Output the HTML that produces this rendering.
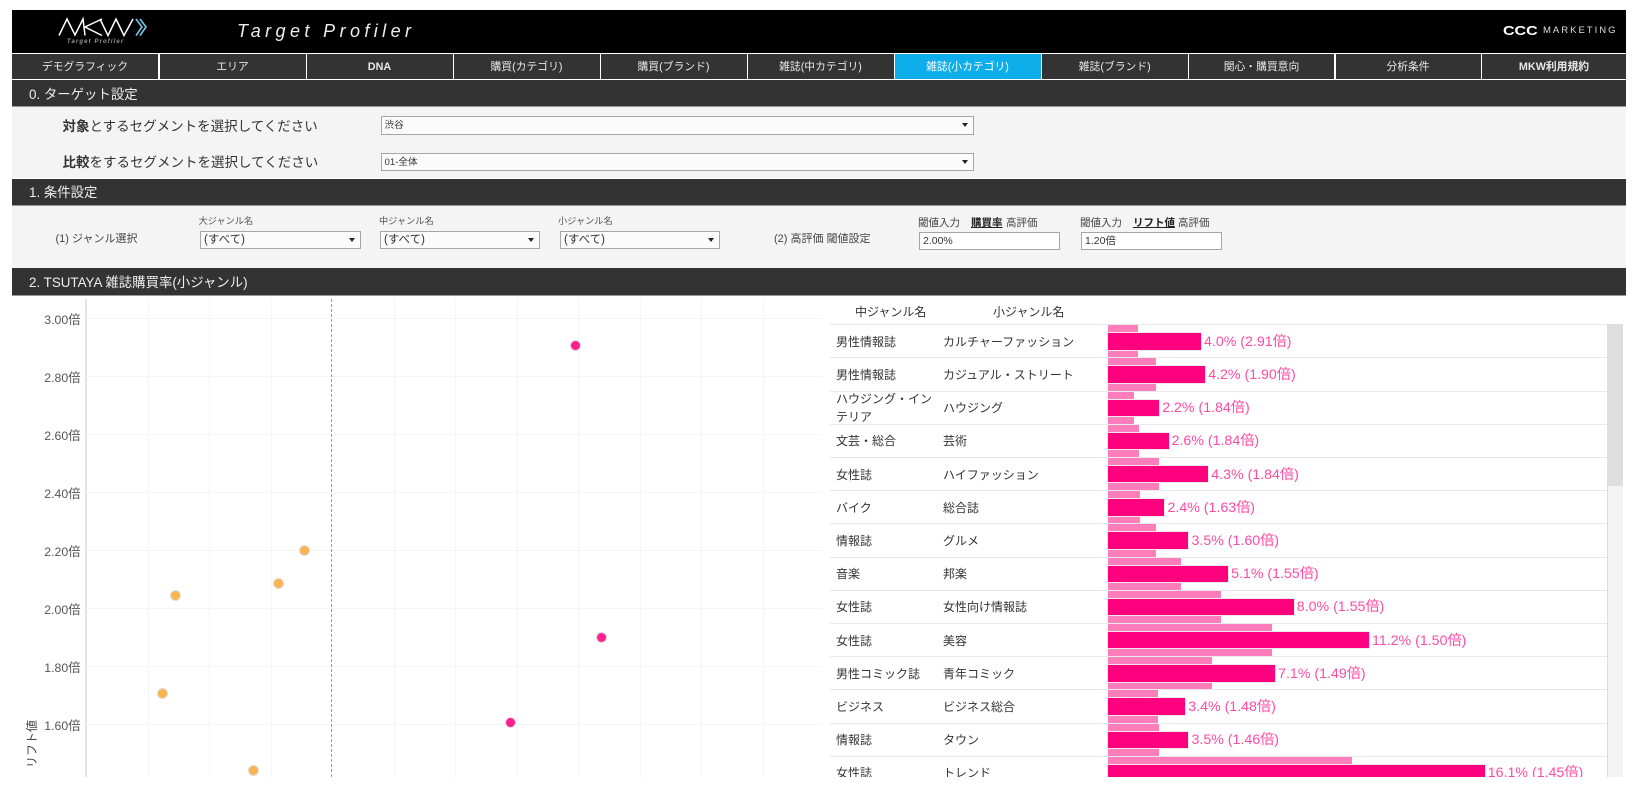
<!DOCTYPE html>
<html lang="ja"><head><meta charset="utf-8"><title>Target Profiler</title>
<style>
html,body{margin:0;padding:0;background:#fff;width:1636px;height:808px;overflow:hidden}
body{font-family:"Liberation Sans","Noto Sans CJK JP",sans-serif;position:relative;color:#333}
.a{position:absolute}
.t{position:absolute;white-space:nowrap}
.nav{position:absolute;top:53.5px;height:25px;line-height:27px;background:#333;color:#e8e8e8;font-size:10.8px;text-align:center}
.sec{position:absolute;left:12px;width:1614px;background:#333;color:#eee;font-size:13.4px;box-sizing:border-box;padding-left:17px;border-bottom:1px solid #999}
.sel{position:absolute;box-sizing:border-box;background:#fbfbfb;border:1px solid #a6a6a6;font-size:9.6px;color:#333;padding-left:3px}
.sel:after{content:"";position:absolute;right:5px;top:50%;margin-top:-2px;border-left:3.2px solid transparent;border-right:3.2px solid transparent;border-top:4.5px solid #222}
.inp{position:absolute;box-sizing:border-box;background:#fff;border:1px solid #a6a6a6;font-size:10.5px;color:#333;padding-left:3px;height:18px;line-height:16px;width:141px;top:231.5px}
.v{position:absolute;top:299px;height:478px;width:1px;background:#f5f5f5}
.h{position:absolute;left:86px;width:737px;height:1px;background:#f5f5f5}
.y{position:absolute;left:29px;width:51.5px;text-align:right;font-size:12.3px;color:#555;line-height:14px}
.d{position:absolute;width:9px;height:9px;border-radius:50%;box-shadow:0 0 0 1px #ddd}
.p{background:#ff1f8f}.o{background:#fbb44f}
.r{position:absolute;left:0;width:777px;height:33.2px}
.c{position:absolute;font-size:12px;line-height:18px;top:7.5px;white-space:nowrap;color:#333}
.c1{left:6px}.c2{left:113px}
.l{position:absolute;left:277.6px;height:7px;background:#ff7dbb}
.m{position:absolute;left:277.6px;top:8px;height:16.4px;background:#ff007f;box-shadow:0 0 0 .6px #ddd}
.n{position:absolute;top:7.5px;font-size:14.2px;line-height:18px;color:#ff4aa5;white-space:nowrap}
.s{position:absolute;left:0;top:32.2px;width:777px;height:1px;background:#e8e8e8}
</style></head><body>
<div class="a" style="left:12px;top:9.5px;width:1614px;height:43px;background:#000"></div>
<svg class="a" style="left:50px;top:12px" width="110" height="40" viewBox="50 12 110 40">
<polyline points="59,35.5 67,19 75,35 83,19 85,35.5" fill="none" stroke="#fff" stroke-width="1.5"/>
<polyline points="102,19 85,27 102,35.5" fill="none" stroke="#fff" stroke-width="1.5"/>
<polyline points="100,19 108,35.5 116,19 124,35.5 133,19" fill="none" stroke="#fff" stroke-width="1.5"/>
<polyline points="136,19 142,27 136,35.5" fill="none" stroke="#7cc4ea" stroke-width="1.6"/>
<polyline points="140,19 146,27 140,35.5" fill="none" stroke="#7cc4ea" stroke-width="1.6"/>
</svg>
<div class="t" style="left:67px;top:38.5px;font-size:6px;line-height:7px;font-style:italic;font-weight:bold;letter-spacing:1.1px;color:#999">Target Profiler</div>
<div class="t" style="left:237px;top:20px;font-size:18px;line-height:22px;font-style:italic;letter-spacing:4.4px;color:#eee">Target Profiler</div>
<div class="t" style="left:1503px;top:23px;font-size:12.8px;line-height:15px;font-weight:bold;color:#fff;transform:scaleX(1.25);transform-origin:left center">CCC</div>
<div class="t" style="left:1543px;top:24.5px;font-size:9.5px;line-height:12px;color:#ddd;letter-spacing:2px">MARKETING</div>

<div class="nav" style="left:12px;width:146px">デモグラフィック</div>
<div class="nav" style="left:159.5px;width:146px">エリア</div>
<div class="nav" style="left:306.5px;width:146px;font-weight:bold">DNA</div>
<div class="nav" style="left:453.5px;width:146px">購買(カテゴリ)</div>
<div class="nav" style="left:600.5px;width:146px">購買(ブランド)</div>
<div class="nav" style="left:747.5px;width:146px">雑誌(中カテゴリ)</div>
<div class="nav" style="left:894.5px;width:146px;background:#0daeea;color:#fff">雑誌(小カテゴリ)</div>
<div class="nav" style="left:1042px;width:145.5px">雑誌(ブランド)</div>
<div class="nav" style="left:1189px;width:145px">関心・購買意向</div>
<div class="nav" style="left:1335.5px;width:145px">分析条件</div>
<div class="nav" style="left:1482px;width:144px;font-weight:bold">MKW利用規約</div>

<div class="sec" style="top:80px;height:27px;line-height:29px">0. ターゲット設定</div>
<div class="a" style="left:12px;top:107px;width:1614px;height:71px;background:#f4f4f4"></div>
<div class="t" style="left:62.5px;top:116px;font-size:13.5px;line-height:22px"><b>対象</b>とするセグメントを選択してください</div>
<div class="t" style="left:62.5px;top:152px;font-size:13.5px;line-height:22px"><b>比較</b>をするセグメントを選択してください</div>
<div class="sel" style="left:380.5px;top:116px;width:593px;height:18.5px;line-height:18px">渋谷</div>
<div class="sel" style="left:380.5px;top:152.5px;width:593px;height:18px;line-height:18px">01-全体</div>

<div class="sec" style="top:178.5px;height:27px;line-height:28px">1. 条件設定</div>
<div class="a" style="left:12px;top:205.5px;width:1614px;height:62.5px;background:#f4f4f4"></div>
<div class="t" style="left:55.5px;top:229.5px;font-size:11px;line-height:18px;color:#444">(1) ジャンル選択</div>
<div class="t" style="left:198.5px;top:215px;font-size:9.2px;line-height:12px;color:#555">大ジャンル名</div>
<div class="t" style="left:379px;top:215px;font-size:9.2px;line-height:12px;color:#555">中ジャンル名</div>
<div class="t" style="left:558px;top:215px;font-size:9.2px;line-height:12px;color:#555">小ジャンル名</div>
<div class="sel" style="left:200px;top:230.5px;width:160.5px;height:18px;line-height:17px;font-size:11.5px">(すべて)</div>
<div class="sel" style="left:380px;top:230.5px;width:160px;height:18px;line-height:17px;font-size:11.5px">(すべて)</div>
<div class="sel" style="left:560px;top:230.5px;width:159.5px;height:18px;line-height:17px;font-size:11.5px">(すべて)</div>
<div class="t" style="left:774px;top:229.5px;font-size:11px;line-height:18px;color:#444">(2) 高評価 閾値設定</div>
<div class="t" style="left:918px;top:215.5px;font-size:10.5px;line-height:14px;color:#444">閾値入力</div>
<div class="t" style="left:971px;top:215.5px;font-size:10.5px;line-height:14px;font-weight:bold;text-decoration:underline;color:#222">購買率</div>
<div class="t" style="left:1006px;top:215.5px;font-size:10.5px;line-height:14px;color:#444">高評価</div>
<div class="t" style="left:1080px;top:215.5px;font-size:10.5px;line-height:14px;color:#444">閾値入力</div>
<div class="t" style="left:1133px;top:215.5px;font-size:10.5px;line-height:14px;font-weight:bold;text-decoration:underline;color:#222">リフト値</div>
<div class="t" style="left:1178px;top:215.5px;font-size:10.5px;line-height:14px;color:#444">高評価</div>
<div class="inp" style="left:919px">2.00%</div>
<div class="inp" style="left:1081px">1.20倍</div>

<div class="sec" style="top:268px;height:27.5px;line-height:29px">2. TSUTAYA 雑誌購買率(小ジャンル)</div>

<div class="a" style="left:85px;top:299px;width:2px;height:478px;background:#e4e4e4"></div>
<div class="v" style="left:148px"></div><div class="v" style="left:209px"></div><div class="v" style="left:271px"></div>
<div class="v" style="left:393.5px"></div><div class="v" style="left:455px"></div><div class="v" style="left:516.5px"></div><div class="v" style="left:578px"></div><div class="v" style="left:640px"></div><div class="v" style="left:701px"></div><div class="v" style="left:763px"></div>
<div class="h" style="top:318px"></div><div class="h" style="top:376px"></div><div class="h" style="top:434px"></div><div class="h" style="top:492px"></div><div class="h" style="top:550px"></div><div class="h" style="top:608px"></div><div class="h" style="top:666px"></div><div class="h" style="top:724px"></div>
<div class="a" style="left:331px;top:299px;height:478px;border-left:1.5px dashed #999"></div>
<div class="y" style="top:312.5px">3.00倍</div><div class="y" style="top:370.5px">2.80倍</div><div class="y" style="top:428.5px">2.60倍</div><div class="y" style="top:486.5px">2.40倍</div><div class="y" style="top:544.5px">2.20倍</div><div class="y" style="top:602.5px">2.00倍</div><div class="y" style="top:660.5px">1.80倍</div><div class="y" style="top:718.5px">1.60倍</div>
<div class="t" style="left:8px;top:737px;width:48px;height:14px;line-height:14px;font-size:12px;color:#444;transform:rotate(-90deg);text-align:left">リフト値</div>
<div class="d p" style="left:571px;top:341px"></div>
<div class="d p" style="left:596.5px;top:633px"></div>
<div class="d p" style="left:506px;top:717.5px"></div>
<div class="d o" style="left:300px;top:545.5px"></div>
<div class="d o" style="left:274px;top:579px"></div>
<div class="d o" style="left:171px;top:590.5px"></div>
<div class="d o" style="left:158px;top:689px"></div>
<div class="d o" style="left:248.5px;top:765.5px"></div>

<div class="t" style="left:855px;top:304px;font-size:12px;line-height:16px">中ジャンル名</div>
<div class="t" style="left:993px;top:304px;font-size:12px;line-height:16px">小ジャンル名</div>
<div class="a" style="left:1607px;top:324px;width:15.5px;height:453px;background:#f3f3f3;box-shadow:inset 1px 0 0 #ddd"></div>
<div class="a" style="left:1607px;top:324px;width:15.5px;height:162px;background:#dedede"></div>

<div class="a" style="left:830px;top:324px;width:777px;height:452.7px;overflow:hidden;border-top:0">
<div class="a" style="left:0;top:0;width:777px;height:1px;background:#e8e8e8"></div>
<div class="r" style="top:1.2px"><div class="c c1">男性情報誌</div><div class="c c2">カルチャーファッション</div><div class="l" style="top:0;width:30.8px"></div><div class="m" style="width:93.4px"></div><div class="l" style="top:25.4px;width:30.8px"></div><div class="n" style="left:374px">4.0% (2.91倍)</div><div class="s"></div></div>
<div class="r" style="top:34.4px"><div class="c c1">男性情報誌</div><div class="c c2">カジュアル・ストリート</div><div class="l" style="top:0;width:48.5px"></div><div class="m" style="width:97.6px"></div><div class="l" style="top:25.4px;width:48.5px"></div><div class="n" style="left:378.2px">4.2% (1.90倍)</div><div class="s"></div></div>
<div class="r" style="top:67.6px"><div class="c c1" style="top:-2px;white-space:normal;width:100px">ハウジング・インテリア</div><div class="c c2">ハウジング</div><div class="l" style="top:0;width:26.6px"></div><div class="m" style="width:51.6px"></div><div class="l" style="top:25.4px;width:26.6px"></div><div class="n" style="left:332.2px">2.2% (1.84倍)</div><div class="s"></div></div>
<div class="r" style="top:100.8px"><div class="c c1">文芸・総合</div><div class="c c2">芸術</div><div class="l" style="top:0;width:31.8px"></div><div class="m" style="width:61px"></div><div class="l" style="top:25.4px;width:31.8px"></div><div class="n" style="left:341.6px">2.6% (1.84倍)</div><div class="s"></div></div>
<div class="r" style="top:134px"><div class="c c1">女性誌</div><div class="c c2">ハイファッション</div><div class="l" style="top:0;width:51.6px"></div><div class="m" style="width:100.7px"></div><div class="l" style="top:25.4px;width:51.6px"></div><div class="n" style="left:381.3px">4.3% (1.84倍)</div><div class="s"></div></div>
<div class="r" style="top:167.2px"><div class="c c1">バイク</div><div class="c c2">総合誌</div><div class="l" style="top:0;width:32.9px"></div><div class="m" style="width:56.9px"></div><div class="l" style="top:25.4px;width:32.9px"></div><div class="n" style="left:337.5px">2.4% (1.63倍)</div><div class="s"></div></div>
<div class="r" style="top:200.4px"><div class="c c1">情報誌</div><div class="c c2">グルメ</div><div class="l" style="top:0;width:48.5px"></div><div class="m" style="width:80.9px"></div><div class="l" style="top:25.4px;width:48.5px"></div><div class="n" style="left:361.5px">3.5% (1.60倍)</div><div class="s"></div></div>
<div class="r" style="top:233.6px"><div class="c c1">音楽</div><div class="c c2">邦楽</div><div class="l" style="top:0;width:73.6px"></div><div class="m" style="width:120.5px"></div><div class="l" style="top:25.4px;width:73.6px"></div><div class="n" style="left:401.1px">5.1% (1.55倍)</div><div class="s"></div></div>
<div class="r" style="top:266.8px"><div class="c c1">女性誌</div><div class="c c2">女性向け情報誌</div><div class="l" style="top:0;width:113.2px"></div><div class="m" style="width:186.2px"></div><div class="l" style="top:25.4px;width:113.2px"></div><div class="n" style="left:466.8px">8.0% (1.55倍)</div><div class="s"></div></div>
<div class="r" style="top:300px"><div class="c c1">女性誌</div><div class="c c2">美容</div><div class="l" style="top:0;width:164.3px"></div><div class="m" style="width:261.4px"></div><div class="l" style="top:25.4px;width:164.3px"></div><div class="n" style="left:542px">11.2% (1.50倍)</div><div class="s"></div></div>
<div class="r" style="top:333.2px"><div class="c c1">男性コミック誌</div><div class="c c2">青年コミック</div><div class="l" style="top:0;width:104.9px"></div><div class="m" style="width:167.5px"></div><div class="l" style="top:25.4px;width:104.9px"></div><div class="n" style="left:448.1px">7.1% (1.49倍)</div><div class="s"></div></div>
<div class="r" style="top:366.4px"><div class="c c1">ビジネス</div><div class="c c2">ビジネス総合</div><div class="l" style="top:0;width:50.6px"></div><div class="m" style="width:77.7px"></div><div class="l" style="top:25.4px;width:50.6px"></div><div class="n" style="left:358.3px">3.4% (1.48倍)</div><div class="s"></div></div>
<div class="r" style="top:399.6px"><div class="c c1">情報誌</div><div class="c c2">タウン</div><div class="l" style="top:0;width:51.6px"></div><div class="m" style="width:80.9px"></div><div class="l" style="top:25.4px;width:51.6px"></div><div class="n" style="left:361.5px">3.5% (1.46倍)</div><div class="s"></div></div>
<div class="r" style="top:432.8px"><div class="c c1">女性誌</div><div class="c c2">トレンド</div><div class="l" style="top:0;width:244.7px"></div><div class="m" style="width:377.2px"></div><div class="l" style="top:25.4px;width:244.7px"></div><div class="n" style="left:657.8px">16.1% (1.45倍)</div><div class="s"></div></div>
</div>
<div class="a" style="left:0;top:777px;width:1636px;height:31px;background:#fff"></div>
</body></html>
